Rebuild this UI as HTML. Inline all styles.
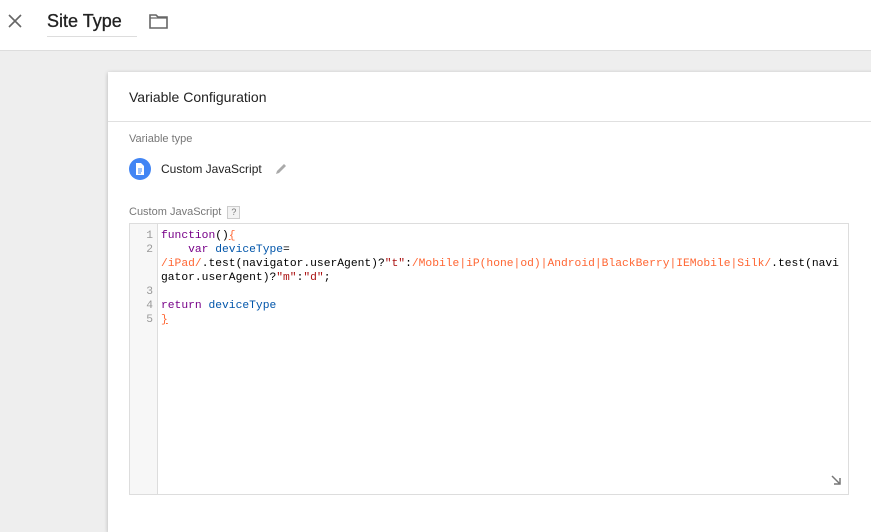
<!DOCTYPE html>
<html><head><style>
body{margin:0;width:871px;height:506px;overflow:hidden;background:#eee;font-family:"Liberation Sans",sans-serif;position:relative}
.top{position:absolute;left:0;top:0;width:871px;height:50px;background:#fff;border-bottom:1px solid #ddd}
.card{position:absolute;left:108px;top:72px;width:780px;height:460px;background:#fff;box-shadow:0 1px 4px rgba(0,0,0,.25)}
.code{position:absolute;left:129px;top:223px;width:718px;height:270px;border:1px solid #ddd;background:#fff}
.gut{position:absolute;left:0;top:0;width:27px;height:270px;background:#f7f7f7;border-right:1px solid #ddd}
pre{margin:0;font-family:"Liberation Mono",monospace;font-size:11.3px;line-height:14px;color:#000}
.ln{position:absolute;left:0;top:5px;width:23px;text-align:right;color:#999}
.src{position:absolute;left:31px;top:5px}
.k{color:#708}.v{color:#05a}.r{color:#f63}.s{color:#a11}.b{color:#f63;text-decoration:underline}
</style></head><body>
<div class="top">
<svg style="position:absolute;left:8px;top:14px" width="14" height="14" viewBox="0 0 14 14"><path d="M1 1L13 13M13 1L1 13" stroke="#666" stroke-width="1.6"/></svg>
<div style="position:absolute;left:47px;top:11px;font-size:18px;color:#222;-webkit-text-stroke:0.3px #222">Site Type</div>
<div style="position:absolute;left:47px;top:36px;width:90px;height:1px;background:#ddd"></div>
<svg style="position:absolute;left:149px;top:13px" width="19" height="16" viewBox="0 0 19 16"><path d="M1 2h6l2 2h9v11H1z" fill="none" stroke="#666" stroke-width="1.6"/><path d="M1 5h17" stroke="#666" stroke-width="1.2"/></svg>
</div>
<div class="card">
<div style="position:absolute;left:21px;top:17px;font-size:14px;color:#222">Variable Configuration</div>
<div style="position:absolute;left:0;top:49px;width:780px;height:1px;background:#e0e0e0"></div>
<div style="position:absolute;left:21px;top:61px;font-size:11px;color:#777">Variable type</div>
<svg style="position:absolute;left:21px;top:86px" width="22" height="22" viewBox="0 0 22 22"><circle cx="11" cy="11" r="11" fill="#4285f4"/><path d="M7 5h5l3 3v9H7z" fill="#fff"/><path d="M9 11h4M9 13h4M9 15h3" stroke="#4285f4" stroke-width="1"/></svg>
<div style="position:absolute;left:53px;top:90px;font-size:12px;color:#222">Custom JavaScript</div>
<svg style="position:absolute;left:167px;top:90px" width="13" height="13" viewBox="0 0 13 13"><path d="M1 12l1-3 7-7 2 2-7 7z" fill="#aaa"/></svg>
<div style="position:absolute;left:21px;top:134px;font-size:11px;color:#777">Custom JavaScript <span style="display:inline-block;width:11px;height:11px;border:1px solid #ccc;background:#f3f3f3;font-size:9px;text-align:center;line-height:11px;margin-left:3px">?</span></div>
</div>
<div class="code">
<div class="gut"><pre class="ln">1
2


3
4
5</pre></div>
<pre class="src"><span class="k">function</span>()<span class="b">{</span>
    <span class="k">var</span> <span class="v">deviceType</span>=
<span class="r">/iPad/</span>.test(navigator.userAgent)?<span class="s">"t"</span>:<span class="r">/Mobile|iP(hone|od)|Android|BlackBerry|IEMobile|Silk/</span>.test(navi
gator.userAgent)?<span class="s">"m"</span>:<span class="s">"d"</span>;

<span class="k">return</span> <span class="v">deviceType</span>
<span class="b">}</span></pre>
<svg style="position:absolute;left:700px;top:250px" width="12" height="12" viewBox="0 0 12 12"><path d="M2 2l8 8M4 10h6V4" stroke="#777" stroke-width="1.5" fill="none"/></svg>
</div>
</body></html>
